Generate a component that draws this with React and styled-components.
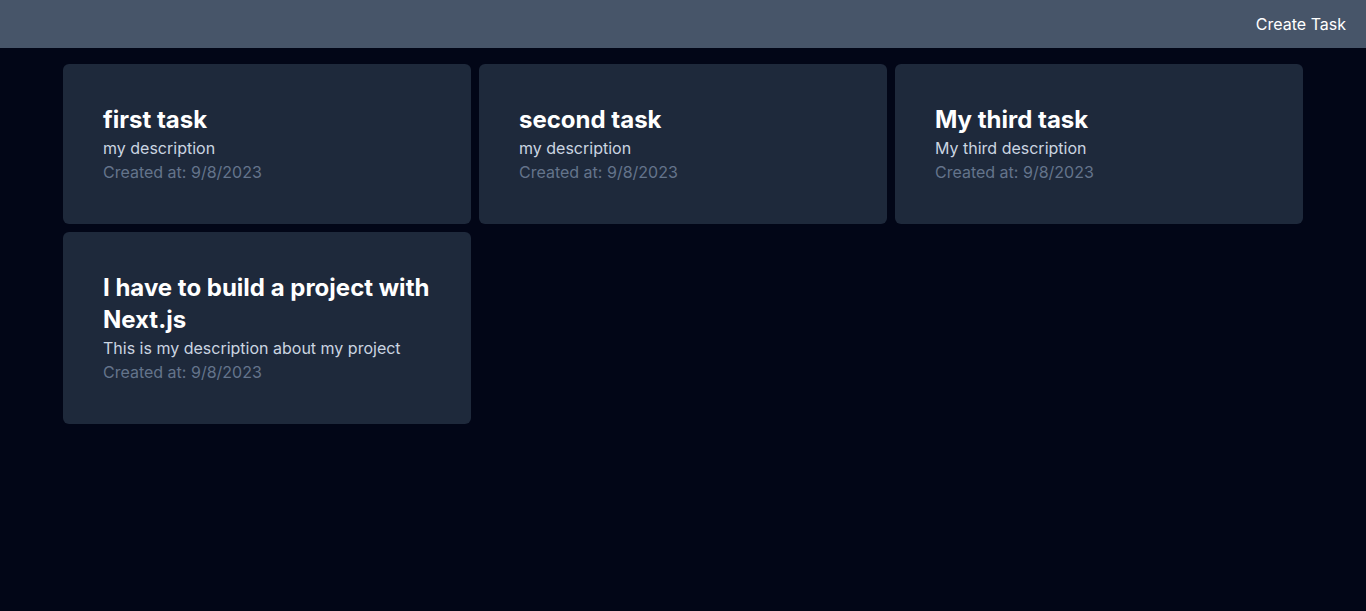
import React from 'react'
import styled, { createGlobalStyle } from 'styled-components'

const tasks = [
  { id: 1, title: 'first task', description: 'my description', createdAt: '9/8/2023' },
  { id: 2, title: 'second task', description: 'my description', createdAt: '9/8/2023' },
  { id: 3, title: 'My third task', description: 'My third description', createdAt: '9/8/2023' },
  {
    id: 4,
    title: 'I have to build a project with Next.js',
    description: 'This is my description about my project',
    createdAt: '9/8/2023',
  },
]

function App() {
  return (
    <>
      <GlobalStyle />
      <Navbar>
        <span />
        <NavLink href="#">Create Task</NavLink>
      </Navbar>
      <Container>
        <TaskGrid>
          {tasks.map(({ id, title, description, createdAt }) => (
            <TaskCard key={id}>
              <TaskTitle>{title}</TaskTitle>
              <TaskDescription>{description}</TaskDescription>
              <TaskDate>Created at: {createdAt}</TaskDate>
            </TaskCard>
          ))}
        </TaskGrid>
      </Container>
    </>
  )
}

export default App

const GlobalStyle = createGlobalStyle`
  * { box-sizing: border-box; }
  html, body {
    margin: 0;
    padding: 0;
    background: #020617;
    color: #fff;
    font-family: Inter, "Noto Sans", sans-serif;
    min-height: 100%;
  }
`

const Navbar = styled.nav`
  height: 48px;
  background: #475569;
  display: flex;
  justify-content: space-between;
  align-items: center;
  padding: 0 20px;
`

const NavLink = styled.a`
  color: #fff;
  text-decoration: none;
  font-size: 16px;
  line-height: 24px;
`

const Container = styled.main`
  max-width: 1280px;
  margin: 0 auto;
  padding: 16px 20px;
`

const TaskGrid = styled.div`
  display: grid;
  grid-template-columns: repeat(3, 1fr);
  gap: 8px;
`

const TaskCard = styled.div`
  background: #1e293b;
  border-radius: 6px;
  padding: 40px;
`

const TaskTitle = styled.h3`
  margin: 0;
  font-size: 24px;
  line-height: 32px;
  font-weight: 700;
  color: #fff;
`

const TaskDescription = styled.p`
  margin: 0;
  font-size: 16px;
  line-height: 24px;
  color: #cbd5e1;
`

const TaskDate = styled.p`
  margin: 0;
  font-size: 16px;
  line-height: 24px;
  color: #64748b;
`
